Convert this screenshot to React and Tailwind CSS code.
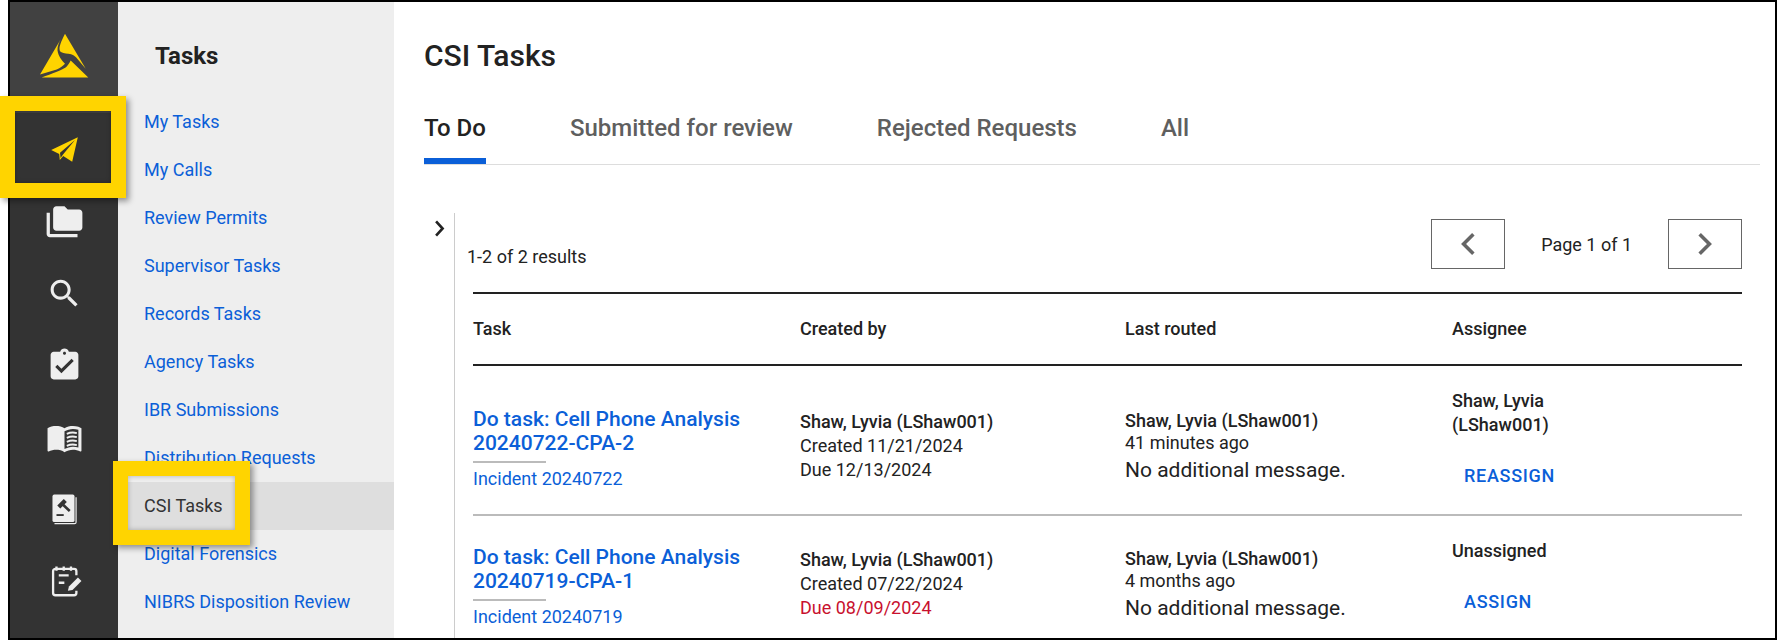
import React from "react";

const navLinks = ["My Tasks", "My Calls", "Review Permits", "Supervisor Tasks", "Records Tasks", "Agency Tasks", "IBR Submissions", "Distribution Requests", "CSI Tasks", "Digital Forensics", "NIBRS Disposition Review"];
const tabs = ["To Do", "Submitted for review", "Rejected Requests", "All"];
const columns = "grid grid-cols-[327px_325px_327px_1fr]";

const rows = [
  {
    height: "h-[148px] border-b-2 border-[#bbbbbb]",
    title: "Do task: Cell Phone Analysis",
    id: "20240722-CPA-2",
    incident: "Incident 20240722",
    created: "Created 11/21/2024",
    due: "Due 12/13/2024",
    dueColor: "text-[#222222]",
    routed: "41 minutes ago",
    assignee: "Shaw, Lyvia (LShaw001)",
    action: "REASSIGN",
  },
  {
    height: "h-[124px]",
    title: "Do task: Cell Phone Analysis",
    id: "20240719-CPA-1",
    incident: "Incident 20240719",
    created: "Created 07/22/2024",
    due: "Due 08/09/2024",
    dueColor: "text-[#c8102e]",
    routed: "4 months ago",
    assignee: "Unassigned",
    action: "ASSIGN",
  },
];

const Logo = () => (
  <svg width="50" height="44" viewBox="39 33.5 50 44" fill="#ffd400">
    <path d="M61 38.3 40 74 56.7 69C60.5 67.5 63 65.5 65 63.3 62 60 58.5 56 57.5 50 57.2 46 59 42 61 38.3Z" />
    <path d="M65 33.3 85.7 68.3 76 56.7C73 54 70.5 53.5 68.3 53.3 65 53 61.5 52.5 60 50.7 58.8 48 59.5 44 65 33.3Z" />
    <path d="M41.7 77 88.3 77 70.7 60C69 63 67.5 65.5 66 66.7 62 69.5 52 73 41.7 77Z" />
  </svg>
);

const PlaneIcon = () => (
  <svg width="37" height="37" viewBox="0 0 37 37">
    <path d="M31.8 6.3 5.2 19 13.2 23 13.8 29 17.2 25 26.2 30.7Z" fill="#ffd400" />
    <path d="M29 9 14 21.8 14.6 27 17 23.6Z" fill="#333333" />
  </svg>
);

const FolderIcon = () => (
  <svg width="39" height="39" viewBox="0 0 24 24" fill="#eeeeee" className="mt-0.5">
    <path d="M3 19h17v2H3c-1.1 0-2-.9-2-2V6h2v13zM23 6v9c0 1.1-.9 2-2 2H7c-1.1 0-2-.9-2-2l.01-11c0-1.1.89-2 1.99-2h5l2 2h7c1.1 0 2 .9 2 2z" />
  </svg>
);

const SearchIcon = () => (
  <svg width="37" height="37" viewBox="0 0 24 24" fill="#eeeeee">
    <path d="M15.5 14h-.79l-.28-.27C15.41 12.59 16 11.11 16 9.5 16 5.91 13.09 3 9.5 3S3 5.91 3 9.5 5.91 16 9.5 16c1.61 0 3.09-.59 4.23-1.57l.27.28v.79l5 4.99L20.49 19l-4.99-5zm-6 0C7.01 14 5 11.99 5 9.5S7.01 5 9.5 5 14 7.01 14 9.5 11.99 14 9.5 14z" />
  </svg>
);

const ClipboardIcon = () => (
  <svg width="37" height="37" viewBox="0 0 24 24" fill="#eeeeee">
    <path d="M19 3h-4.18C14.4 1.84 13.3 1 12 1c-1.3 0-2.4.84-2.82 2H5c-1.1 0-2 .9-2 2v14c0 1.1.9 2 2 2h14c1.1 0 2-.9 2-2V5c0-1.1-.9-2-2-2zm-7 0c.55 0 1 .45 1 1s-.45 1-1 1-1-.45-1-1 .45-1 1-1zm-2 14l-4-4 1.41-1.41L10 14.17l6.59-6.59L18 9l-8 8z" />
  </svg>
);

const BookIcon = () => (
  <svg width="37" height="37" viewBox="0 0 24 24" fill="#eeeeee">
    <path fillRule="evenodd" d="M21 5c-1.11-.35-2.33-.5-3.5-.5-1.95 0-4.05.4-5.5 1.5-1.45-1.1-3.55-1.5-5.5-1.5S2.45 4.9 1 6v14.65c0 .25.25.5.5.5.1 0 .15-.05.25-.05C3.1 20.45 5.05 20 6.5 20c1.95 0 4.05.4 5.5 1.5 1.35-.85 3.8-1.5 5.5-1.5 1.65 0 3.35.3 4.75 1.05.1.05.15.05.25.05.25 0 .5-.25.5-.5V6c-.6-.45-1.25-.75-2-1zm0 13.5c-1.1-.35-2.3-.5-3.5-.5-1.7 0-4.15.65-5.5 1.5V8c1.35-.85 3.8-1.5 5.5-1.5 1.2 0 2.4.15 3.5.5v11.5z" />
    <path d="M13.5 9.6c2-.9 4.6-1 6.5-.5M13.5 12.2c2-.9 4.6-1 6.5-.5M13.5 14.8c2-.9 4.6-1 6.5-.5M13.5 17.4c2-.9 4.6-1 6.5-.5" fill="none" stroke="#eeeeee" strokeWidth="1.2" />
  </svg>
);

const GavelIcon = () => (
  <svg width="37" height="37" viewBox="0 0 24 24">
    <rect x="4.2" y="2.3" width="14.3" height="17.8" rx="1.2" fill="#eeeeee" />
    <path d="M19.5 4v16.2a1 1 0 0 1-1 1H5.5" fill="none" stroke="#eeeeee" strokeWidth="0.8" />
    <rect x="7.4" y="6.9" width="6" height="2.8" transform="rotate(-45 10.4 8.3)" fill="#333333" />
    <path d="M10.4 8.3 15.4 13" stroke="#333333" strokeWidth="1.7" />
    <path d="M6.8 15.6H11.5" stroke="#333333" strokeWidth="1.2" />
  </svg>
);

const NoteIcon = () => (
  <svg width="37" height="37" viewBox="0 0 24 24" fill="none" stroke="#eeeeee" strokeWidth="1.5">
    <path d="M19.7 8V5.3a1.5 1.5 0 0 0-1.5-1.5H6.1a1.5 1.5 0 0 0-1.5 1.5v14.1a1.5 1.5 0 0 0 1.5 1.5h12.1a1.5 1.5 0 0 0 1.5-1.5V18" />
    <path d="M6.8 2.2V5M11.5 2.2V5M16.2 2.2V5M8.3 8H14.7M8.3 12.8H11.9" />
    <path d="M14.2 18 14.9 15.2 20.7 9.4 23 11.7 17.2 17.5Z" fill="#eeeeee" stroke="none" />
  </svg>
);

const Chevron = ({ points, className }) => (
  <svg className={className} viewBox="0 0 18 26" fill="none" stroke="currentColor" strokeWidth="4">
    <polyline points={points} />
  </svg>
);

const sideIcons = [PlaneIcon, FolderIcon, SearchIcon, ClipboardIcon, BookIcon, GavelIcon, NoteIcon];

const App = () => {
  return (
    <div className="relative w-[1779px] h-[640px] bg-white pl-2 pr-0.5 overflow-hidden font-['Roboto',sans-serif] text-[#222222]">
      <div className="h-full border-2 border-black flex overflow-hidden">
        <aside className="w-[108px] shrink-0 bg-[#333333]">
          <div className="h-[111px] bg-[#414141] flex items-center justify-center pb-1">
            <Logo />
          </div>
          {sideIcons.map((Icon, i) => (
            <div key={i} className="h-[72px] flex items-center justify-center">
              <Icon />
            </div>
          ))}
        </aside>

        <nav className="w-[276px] shrink-0 bg-[#eeeeee]">
          <h2 className="h-[96px] pl-[37px] pt-3 flex items-center text-[24px] font-bold">Tasks</h2>
          {navLinks.map((link) => (
            <div
              key={link}
              className={`h-[48px] px-[26px] pb-0.5 flex items-center text-[18px] ${link === "CSI Tasks" ? "bg-[#dedede] text-[#333333]" : "text-[#0b5fd8]"}`}
            >
              {link}
            </div>
          ))}
        </nav>

        <main className="flex-1 min-w-0 pl-[30px] pr-[15px]">
          <h1 className="h-[106px] flex items-center text-[30px] font-medium">CSI Tasks</h1>
          <div className="flex gap-[84px] border-b border-[#dddddd]">
            {tabs.map((tab, i) => (
              <div
                key={tab}
                className={`h-[56px] pb-3 leading-[40px] text-[24px] font-medium border-b-[6px] ${i === 0 ? "border-[#0b5fd8] text-[#222222]" : "border-transparent text-[#5f5f5f]"}`}
              >
                {tab}
              </div>
            ))}
          </div>

          <div className="mt-[48px] flex pr-[18px]">
            <div className="w-[30px] shrink-0 pt-[7px] pl-[10px]">
              <Chevron points="3,2 13,13 3,24" className="w-[12px] h-[17px] text-[#222222]" />
            </div>
            <div className="flex-1 min-w-0 border-l border-[#cccccc] pl-[12px]">
              <div className="h-[79px] flex justify-between">
                <div className="pt-[32px] leading-6 text-[18px]">1-2 of 2 results</div>
                <div className="mt-[6px] h-[50px] flex items-center text-[18px]">
                  <button className="w-[74px] h-[50px] border border-[#666666] flex items-center justify-center text-[#666666]">
                    <Chevron points="15,2 4,13 15,24" className="w-[16px] h-[24px]" />
                  </button>
                  <span className="mx-[36px]">Page 1 of 1</span>
                  <button className="w-[74px] h-[50px] border border-[#666666] flex items-center justify-center text-[#666666]">
                    <Chevron points="3,2 14,13 3,24" className="w-[16px] h-[24px]" />
                  </button>
                </div>
              </div>

              <div className="ml-[6px]">
                <div className={`${columns} h-[74px] pb-0.5 items-center border-y-2 border-[#222222] text-[18px] font-medium`}>
                  <div>Task</div>
                  <div>Created by</div>
                  <div>Last routed</div>
                  <div>Assignee</div>
                </div>
                {rows.map((row) => (
                  <div key={row.id} className={`${columns} items-center box-content ${row.height}`}>
                    <div className="pt-[18px]">
                      <div className="text-[21px] leading-6 font-medium text-[#0b5fd8]">
                        <div>{row.title}</div>
                        <div>{row.id}</div>
                      </div>
                      <div className="w-[73px] h-0.5 bg-[#bbbbbb] mt-1.5 mb-1" />
                      <div className="text-[18px] leading-6 text-[#0b5fd8]">{row.incident}</div>
                    </div>
                    <div className="pt-[11px] text-[18px] leading-6">
                      <div className="font-medium">Shaw, Lyvia (LShaw001)</div>
                      <div>{row.created}</div>
                      <div className={row.dueColor}>{row.due}</div>
                    </div>
                    <div className="pt-[11px] text-[18px] leading-6">
                      <div className="font-medium">Shaw, Lyvia (LShaw001)</div>
                      <div className="-mt-0.5">{row.routed}</div>
                      <div className="mt-0.5 text-[21px] leading-[26px]">No additional message.</div>
                    </div>
                    <div className="self-start pt-[23px] pr-[100px] text-[18px] leading-6">
                      <div className="font-medium">{row.assignee}</div>
                      <div className="mt-[27px] pl-[12px] font-medium tracking-[0.7px] text-[#0b5fd8]">{row.action}</div>
                    </div>
                  </div>
                ))}
              </div>
            </div>
          </div>
        </main>
      </div>

      {/* callout frames drawn over the screenshot */}
      <div className="absolute left-0 top-[96px] w-[126px] h-[102px] border-[15px] border-[#ffd400] shadow-[3px_3px_6px_rgba(0,0,0,0.4),inset_0_0_5px_rgba(0,0,0,0.25)]" />
      <div className="absolute left-[113px] top-[461px] w-[137px] h-[84px] border-[15px] border-[#ffd400] shadow-[3px_3px_6px_rgba(0,0,0,0.4),inset_0_0_5px_rgba(0,0,0,0.25)]" />
    </div>
  );
};

export default App;
